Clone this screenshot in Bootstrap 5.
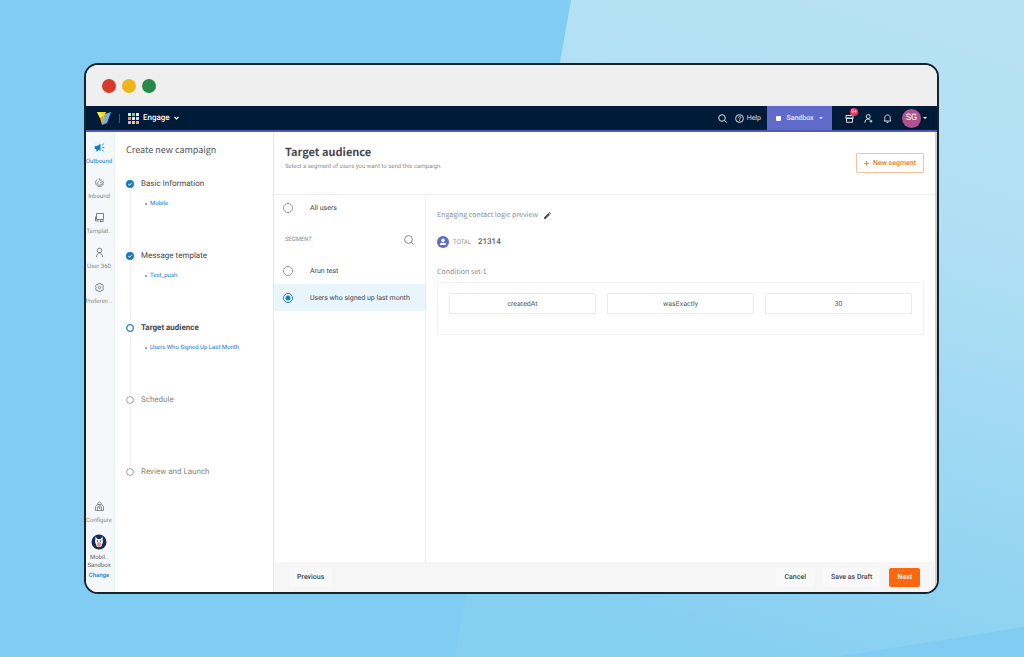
<!DOCTYPE html>
<html lang="en">
<head>
<meta charset="utf-8">
<meta name="viewport" content="width=device-width, initial-scale=1">
<title>Create new campaign</title>
<link href="https://cdn.jsdelivr.net/npm/bootstrap@5.3.0/dist/css/bootstrap.min.css" rel="stylesheet">
<style>
  :root { --blue: #0f7dcb; --ink: #45474a; --muted: #8b8d90; --line: #ebedee; --humanist: "Noto Sans CJK SC", "Noto Sans", sans-serif; }
  body { font-family: Roboto, sans-serif; font-size: 7px; line-height: 10px; color: var(--ink); background: #80ccf2; text-rendering: geometricPrecision; }
  a { text-decoration: none; color: var(--blue); }
  button, input { font-family: inherit; font-size: inherit; line-height: inherit; color: inherit; text-rendering: inherit; }
  svg { display: block; flex: none; }
  .stage { min-height: 100vh; padding: 63px 85px 63px 84px; }
  .backdrop { position: absolute; inset: 0; width: 100%; height: 100%; z-index: -1; }
  .frame { border: 2px solid #17222b; border-radius: 14px; overflow: hidden; background: #fff; }
  .titlebar { height: 41px; padding: 0 16px; background: #efefef; gap: 6px; }
  .light { width: 14px; height: 14px; border-radius: 50%; }
  .light.close-dot { background: #d63a2b; }
  .light.min-dot { background: #f0b51b; }
  .light.max-dot { background: #278b47; }
  .topbar { height: 26px; background: #001b38; border-bottom: 2px solid #4f5bb5; color: #fff; padding-left: 11px; }
  .plain { border: 0; background: none; padding: 0; display: flex; align-items: center; }
  .product { font-size: 8px; font-weight: 500; gap: 4px; }
  .rule { width: 1px; height: 9px; background: #41556c; }
  .brand, .lookup { gap: 8px; }
  .lookup { margin-right: 6px; }
  .env { width: 65px; background: #5f6acb; font-weight: 500; justify-content: space-between; padding: 0 9px; color: #e9ebff; }
  .help { gap: 3px; color: #dde3ea; }
  .tools { gap: 10px; margin: 0 10px 0 13px; }
  .me { gap: 2px; }
  .count { position: absolute; top: -6px; right: -4px; width: 8px; height: 8px; border-radius: 4px; background: #f0365f; color: #fff; font-size: 5px; line-height: 8px; text-align: center; }
  .initials { width: 19px; height: 19px; border-radius: 50%; background: #ae5390; font-size: 9px; line-height: 19px; text-align: center; }
  .caret { border: 2px solid transparent; border-top-color: currentColor; border-bottom: 0; }
  .rail { width: 29px; background: #f5f8fa; border-right: 1px solid #edf0f2; font-size: 6px; line-height: 8px; padding: 8px 2px 12px 0; }
  .rail a { color: #85888b; display: flex; flex-direction: column; align-items: center; gap: 5px; white-space: nowrap; height: 35px; padding-top: 2px; }
  .rail a.active { color: var(--blue); }
  .rail .tenant { height: auto; gap: 0; padding: 0; color: #606366; }
  .rail .tenant svg { margin-bottom: 4px; }
  .rail .change { height: auto; padding: 2px 0 0; color: var(--blue); font-weight: 500; }
  .steps { width: 159px; border-right: 1px solid #e4e6e8; padding: 12px 11px; }
  .steps h1 { font: 400 9px/12px var(--humanist); color: #515356; margin: 0 0 22px; }
  .steps li { height: 72px; padding-left: 15px; position: relative; font-size: 8px; line-height: 12px; }
  .steps li::before { content: ""; position: absolute; left: 4px; top: 12px; height: 60px; border-left: 1px solid #eff1f2; }
  .steps li:last-child::before { display: none; }
  .steps li > svg { position: absolute; left: 0; top: 2px; }
  .steps li a { display: block; font-size: 6px; line-height: 8px; margin: 10px 0 0 9px; position: relative; }
  .steps li a::before { content: ""; position: absolute; left: -5px; top: 3px; width: 2px; height: 2px; border-radius: 1px; background: #5c8ab0; }
  .todo { color: #85878a; }
  .work { border-right: 2px solid #cfd0d4; }
  .head { height: 63px; border-bottom: 1px solid var(--line); padding: 12px 11px 0; }
  .head h2 { font: 700 11px/16px var(--humanist); margin: 0; }
  .head p { font-size: 6px; line-height: 8px; margin: 3px 0 0; color: var(--muted); }
  .add { border: 1px solid #f8c39f; border-radius: 1px; background: #fff; color: #ed7733; font-weight: 500; height: 20px; padding: 0 7px; margin-top: 9px; gap: 4px; }
  .segments { width: 152px; border-right: 1px solid var(--line); }
  .choice { display: flex; align-items: center; height: 26px; padding-left: 9px; gap: 17px; }
  .choice.on { background: #e9f5fc; height: 27px; }
  .choice input { appearance: none; width: 10px; height: 10px; border: 1px solid #96999c; border-radius: 50%; margin: 0; }
  .choice input:checked { border-color: var(--blue); background: radial-gradient(circle, var(--blue) 2px, #fff 3px); }
  .group { height: 37px; padding: 0 11px; font-size: 6px; font-style: italic; color: var(--muted); }
  .preview { padding: 14px 11px; color: #8d8f92; font: 400 7px/12px var(--humanist); }
  .logic { gap: 6px; }
  .total { margin: 15px 0 18px; gap: 4px; font-size: 6px; }
  .total b { font: 500 8px/12px Roboto, sans-serif; color: #5e6063; margin-left: 3px; }
  .rules { border: 1px solid #f3f4f5; padding: 10px 11px 20px; margin-top: 4px; gap: 11px; }
  .rules input { flex: 1 1 0; min-width: 0; height: 21px; text-align: center; border: 1px solid #e9ebed; border-radius: 1px; font: 400 7px/10px Roboto, sans-serif; color: #55585b; }
  .foot { height: 30px; background: #f6f6f6; padding: 0 15px; gap: 9px; }
  .foot button { border: 0; height: 19px; border-radius: 2px; background: #f9f9f9; padding: 0 8px; font-weight: 500; }
  .foot .go { background: #fb680d; color: #fff; }
</style>
<script src="https://cdn.jsdelivr.net/npm/bootstrap@5.3.0/dist/js/bootstrap.bundle.min.js"></script>
</head>
<body>
<svg class="backdrop" viewBox="0 0 1024 657" preserveAspectRatio="none" aria-hidden="true">
  <defs><linearGradient id="sheen" gradientUnits="userSpaceOnUse" x1="900" y1="0" x2="700" y2="657"><stop offset="0" stop-color="#b7e2f5"/><stop offset=".3" stop-color="#b0dff4"/><stop offset="1" stop-color="#85cff1"/></linearGradient></defs>
  <path d="M571 0H1024V627L835 657H455Z" fill="url(#sheen)"/>
</svg>
<div class="stage d-flex">
  <div class="frame d-flex flex-column flex-grow-1">
    <div class="titlebar d-flex align-items-center">
      <span class="light close-dot"></span><span class="light min-dot"></span><span class="light max-dot"></span>
    </div>
    <header class="topbar d-flex align-items-stretch">
      <div class="brand d-flex align-items-center">
        <svg width="14" height="13" viewBox="0 0 14 13"><path d="M0 0H9L7 5 3 6Z" fill="#fcd31b"/><path d="M0 0 3 6 7 5 4 1Z" fill="#f7ea45"/><path d="M8 2 14 0 10 11 5 13Z" fill="#64b8ec"/><path d="M3 6 8 3 7 9 5 13Z" fill="#e8a53a"/></svg>
        <span class="rule"></span>
        <button class="plain product text-white" type="button">
          <svg width="11" height="11" viewBox="0 0 11 11"><g fill="#e8edf1"><path d="M0 0h3v3H0z" fill="#d7efd8"/><path d="M4 0h3v3H4z" fill="#82c996"/><path d="M8 0h3v3H8z"/><path d="M0 4h3v3H0z" fill="#ef9a83"/><path d="M4 4h3v3H4z"/><path d="M8 4h3v3H8z" fill="#b7dff1"/><path d="M0 8h3v3H0z" fill="#c8b1e5"/><path d="M4 8h3v3H4z" fill="#f0cf78"/><path d="M8 8h3v3H8z" fill="#ef9fae"/></g></svg>
          Engage
          <svg width="5" height="4" viewBox="0 0 5 4"><path d="M.5 1 2.500 3 4.500 1" fill="none" stroke="#fff" stroke-width="1.200"/></svg>
        </button>
      </div>
      <div class="d-flex align-items-stretch ms-auto">
        <div class="lookup d-flex align-items-center">
          <button class="plain" type="button" aria-label="Search"><svg width="9" height="9" viewBox="0 0 9 9" fill="none" stroke="#dbe2ea"><circle cx="4" cy="4" r="3.300"/><path d="M6.400 6.400 8.600 8.600"/></svg></button>
          <a class="d-flex align-items-center help" href="#"><svg width="9" height="9" viewBox="0 0 9 9" fill="none" stroke="#dbe2ea"><circle cx="4.500" cy="4.500" r="3.900"/><path d="M3.200 3.700C3.200 2 5.800 2 5.800 3.600 5.800 4.500 4.500 4.500 4.500 5.500M4.500 6.200V7"/></svg>Help</a>
        </div>
        <button class="plain env" type="button"><svg width="5" height="5"><rect width="5" height="5" rx="1" fill="#fff"/></svg>Sandbox<span class="caret"></span></button>
        <div class="tools d-flex align-items-center">
          <button class="plain position-relative" type="button" aria-label="Store"><svg width="9" height="9" viewBox="0 0 9 9" fill="none" stroke="#dbe2ea"><path d="M1 1.500H8V4H1ZM.5 4.500H8.500M1.500 4.500V8.300H7.500V4.500"/></svg><span class="count">9+</span></button>
          <button class="plain" type="button" aria-label="Users"><svg width="9" height="9" viewBox="0 0 9 9" fill="none" stroke="#dbe2ea"><circle cx="4.200" cy="2.600" r="2"/><path d="M.9 8.700C1 6 2.500 5 4 5 5.200 5 6 5.600 6.400 6.200M7 5.800V8.600M5.600 7.200H8.400"/></svg></button>
          <button class="plain" type="button" aria-label="Notifications"><svg width="9" height="9" viewBox="0 0 9 9" fill="none" stroke="#dbe2ea"><path d="M1 7H8C7 6 7.200 5 7.200 3.800 7.200 .1 1.800 .1 1.800 3.800 1.800 5 2 6 1 7ZM3.600 8.400H5.400"/></svg></button>
          <button class="plain text-white me" type="button"><span class="initials">SG</span><span class="caret"></span></button>
        </div>
      </div>
    </header>
    <div class="d-flex flex-grow-1">
      <nav class="rail d-flex flex-column flex-shrink-0">
        <a class="active" href="#"><svg width="11" height="11" viewBox="0 0 11 11"><rect width="11" height="11" fill="#e9f4fb"/><path d="M.8 4H3L6.500 2V9L4 7.500V9.200H2.300V7H.8Z" fill="#0f7dcb"/><path d="M8 3.200 9.500 2M8.300 5.500H10.300M8 7.800 9.500 9" stroke="#0f7dcb" stroke-width=".9"/></svg>Outbound</a>
        <a href="#"><svg width="11" height="11" viewBox="0 0 11 11" fill="none" stroke="#7c7f83" stroke-width=".9"><path d="M3 2.500A4 4 0 1 0 9.500 6.500M5.500 1V3.500M7.500 2 6.500 4M5 4.500A2 2 0 1 0 7.500 7L10 5M6 6 9.500 4"/></svg>Inbound</a>
        <a href="#"><svg width="11" height="11" viewBox="0 0 11 11" fill="none" stroke="#7c7f83"><path d="M2.500 1.500H9.500V7.500H2.500ZM1.500 4.500V9M1.500 9H5M6.500 7.500V10L8 9 9 10V7.500"/></svg>Templat..</a>
        <a href="#"><svg width="11" height="11" viewBox="0 0 11 11" fill="none" stroke="#7c7f83"><circle cx="5.500" cy="3.500" r="2.300"/><path d="M2.500 10C2.500 7.500 4 6 5.500 6S8.500 7.500 8.500 10"/></svg>User 360</a>
        <a href="#"><svg width="11" height="11" viewBox="0 0 11 11" fill="none" stroke="#7c7f83"><path d="M4.500 1.500H6.500L7 2.500 8.600 2.600 9.400 4.200 8.900 5.500 9.400 6.800 8.600 8.400 7 8.500 6.500 9.500H4.500L4 8.500 2.400 8.400 1.600 6.800 2.100 5.500 1.600 4.200 2.400 2.600 4 2.500Z"/><circle cx="5.500" cy="5.500" r="1.200"/></svg>Preferen...</a>
        <a class="mt-auto" href="#"><svg width="11" height="11" viewBox="0 0 11 11" fill="none" stroke="#7c7f83" stroke-width=".9"><path d="M1.500 9.500V5.500L3.500 3.500V2.500L5.500 1 7.500 2.500V3.500L9.500 5.500V9.500ZM3.500 9V6H7.500V9M3.500 3.500H7.500M5.500 6V8M4.500 4.700H6.500"/></svg>Configure</a>
        <a class="tenant" href="#"><svg width="16" height="16" viewBox="0 0 16 16"><circle cx="8" cy="8" r="7.500" fill="#18285b"/><path d="M4.500 2.500 6.500 5H9.500L11.500 2.500 12 8 10 13H6L4 8Z" fill="#f4f3f7"/><path d="M6 9 8 8 10 9 9.500 12 8 13.500 6.500 12Z" fill="#e48b81"/><circle cx="6.500" cy="7" r=".7" fill="#18285b"/><circle cx="9.500" cy="7" r=".7" fill="#18285b"/></svg><span>Mobil..</span><span>Sandbox</span></a>
        <a class="change" href="#">Change</a>
      </nav>
      <aside class="steps flex-shrink-0">
        <h1>Create new campaign</h1>
        <ol class="list-unstyled m-0">
          <li><svg width="8" height="8" viewBox="0 0 8 8"><circle cx="4" cy="4" r="4" fill="#0f7dcb"/><path d="M2.200 4 3.500 5.300 5.900 2.900" fill="none" stroke="#fff"/></svg>Basic Information<a href="#">Mobile</a></li>
          <li><svg width="8" height="8" viewBox="0 0 8 8"><circle cx="4" cy="4" r="4" fill="#0f7dcb"/><path d="M2.200 4 3.500 5.300 5.900 2.900" fill="none" stroke="#fff"/></svg>Message template<a href="#">Test_push</a></li>
          <li><svg width="8" height="8" viewBox="0 0 8 8"><circle cx="4" cy="4" r="3.300" fill="#fff" stroke="#2c86c4" stroke-width="1.300"/></svg><span class="fw-bold">Target audience</span><a href="#">Users Who Signed Up Last Month</a></li>
          <li class="todo"><svg width="8" height="8" viewBox="0 0 8 8"><circle cx="4" cy="4" r="3.400" fill="#fff" stroke="#a0a2a4"/></svg>Schedule</li>
          <li class="todo"><svg width="8" height="8" viewBox="0 0 8 8"><circle cx="4" cy="4" r="3.400" fill="#fff" stroke="#a0a2a4"/></svg>Review and Launch</li>
        </ol>
      </aside>
      <main class="work d-flex flex-column flex-grow-1">
        <div class="head d-flex justify-content-between align-items-start">
          <div><h2>Target audience</h2><p>Select a segment of users you want to send this campaign.</p></div>
          <button class="plain add" type="button"><svg width="5" height="5" viewBox="0 0 5 5"><path d="M2.500 0V5M0 2.500H5" stroke="#ed7733" stroke-width=".8"/></svg>New segment</button>
        </div>
        <div class="d-flex flex-grow-1">
          <section class="segments flex-shrink-0">
            <label class="choice"><input type="radio" name="segment">All users</label>
            <div class="group d-flex align-items-center justify-content-between"><span>SEGMENT</span>
              <button class="plain" type="button" aria-label="Search segments"><svg width="10" height="10" viewBox="0 0 10 10" fill="none" stroke="#85888b"><circle cx="4.500" cy="4.500" r="3.900"/><path d="M7.300 7.300 9.700 9.700"/></svg></button></div>
            <label class="choice"><input type="radio" name="segment">Arun test</label>
            <label class="choice on"><input type="radio" name="segment" checked>Users who signed up last month</label>
          </section>
          <section class="preview flex-grow-1">
            <div class="logic d-flex align-items-center">Engaging contact logic preview
              <button class="plain" type="button" aria-label="Edit"><svg width="7" height="7" viewBox="0 0 7 7"><path d="M0 7V5.400L4.300 1.100 5.900 2.700 1.600 7ZM4.800 .6 5.400 0 7 1.600 6.400 2.200Z" fill="#505356"/></svg></button></div>
            <div class="total d-flex align-items-center"><svg width="12" height="12" viewBox="0 0 12 12"><circle cx="6" cy="6" r="6" fill="#606dc5"/><circle cx="6" cy="4.200" r="1.700" fill="#fff"/><path d="M3 9V8C3 6.200 9 6.200 9 8V9Z" fill="#fff"/></svg>TOTAL<b>21314</b></div>
            <div>Condition set-1</div>
            <div class="rules d-flex">
              <input type="text" value="createdAt" aria-label="Attribute" readonly>
              <input type="text" value="wasExactly" aria-label="Operator" readonly>
              <input type="text" value="30" aria-label="Value" readonly>
            </div>
          </section>
        </div>
        <div class="foot d-flex align-items-center">
          <button class="me-auto" type="button">Previous</button>
          <button type="button">Cancel</button>
          <button type="button">Save as Draft</button>
          <button class="go" type="button">Next</button>
        </div>
      </main>
    </div>
  </div>
</div>
</body>
</html>
